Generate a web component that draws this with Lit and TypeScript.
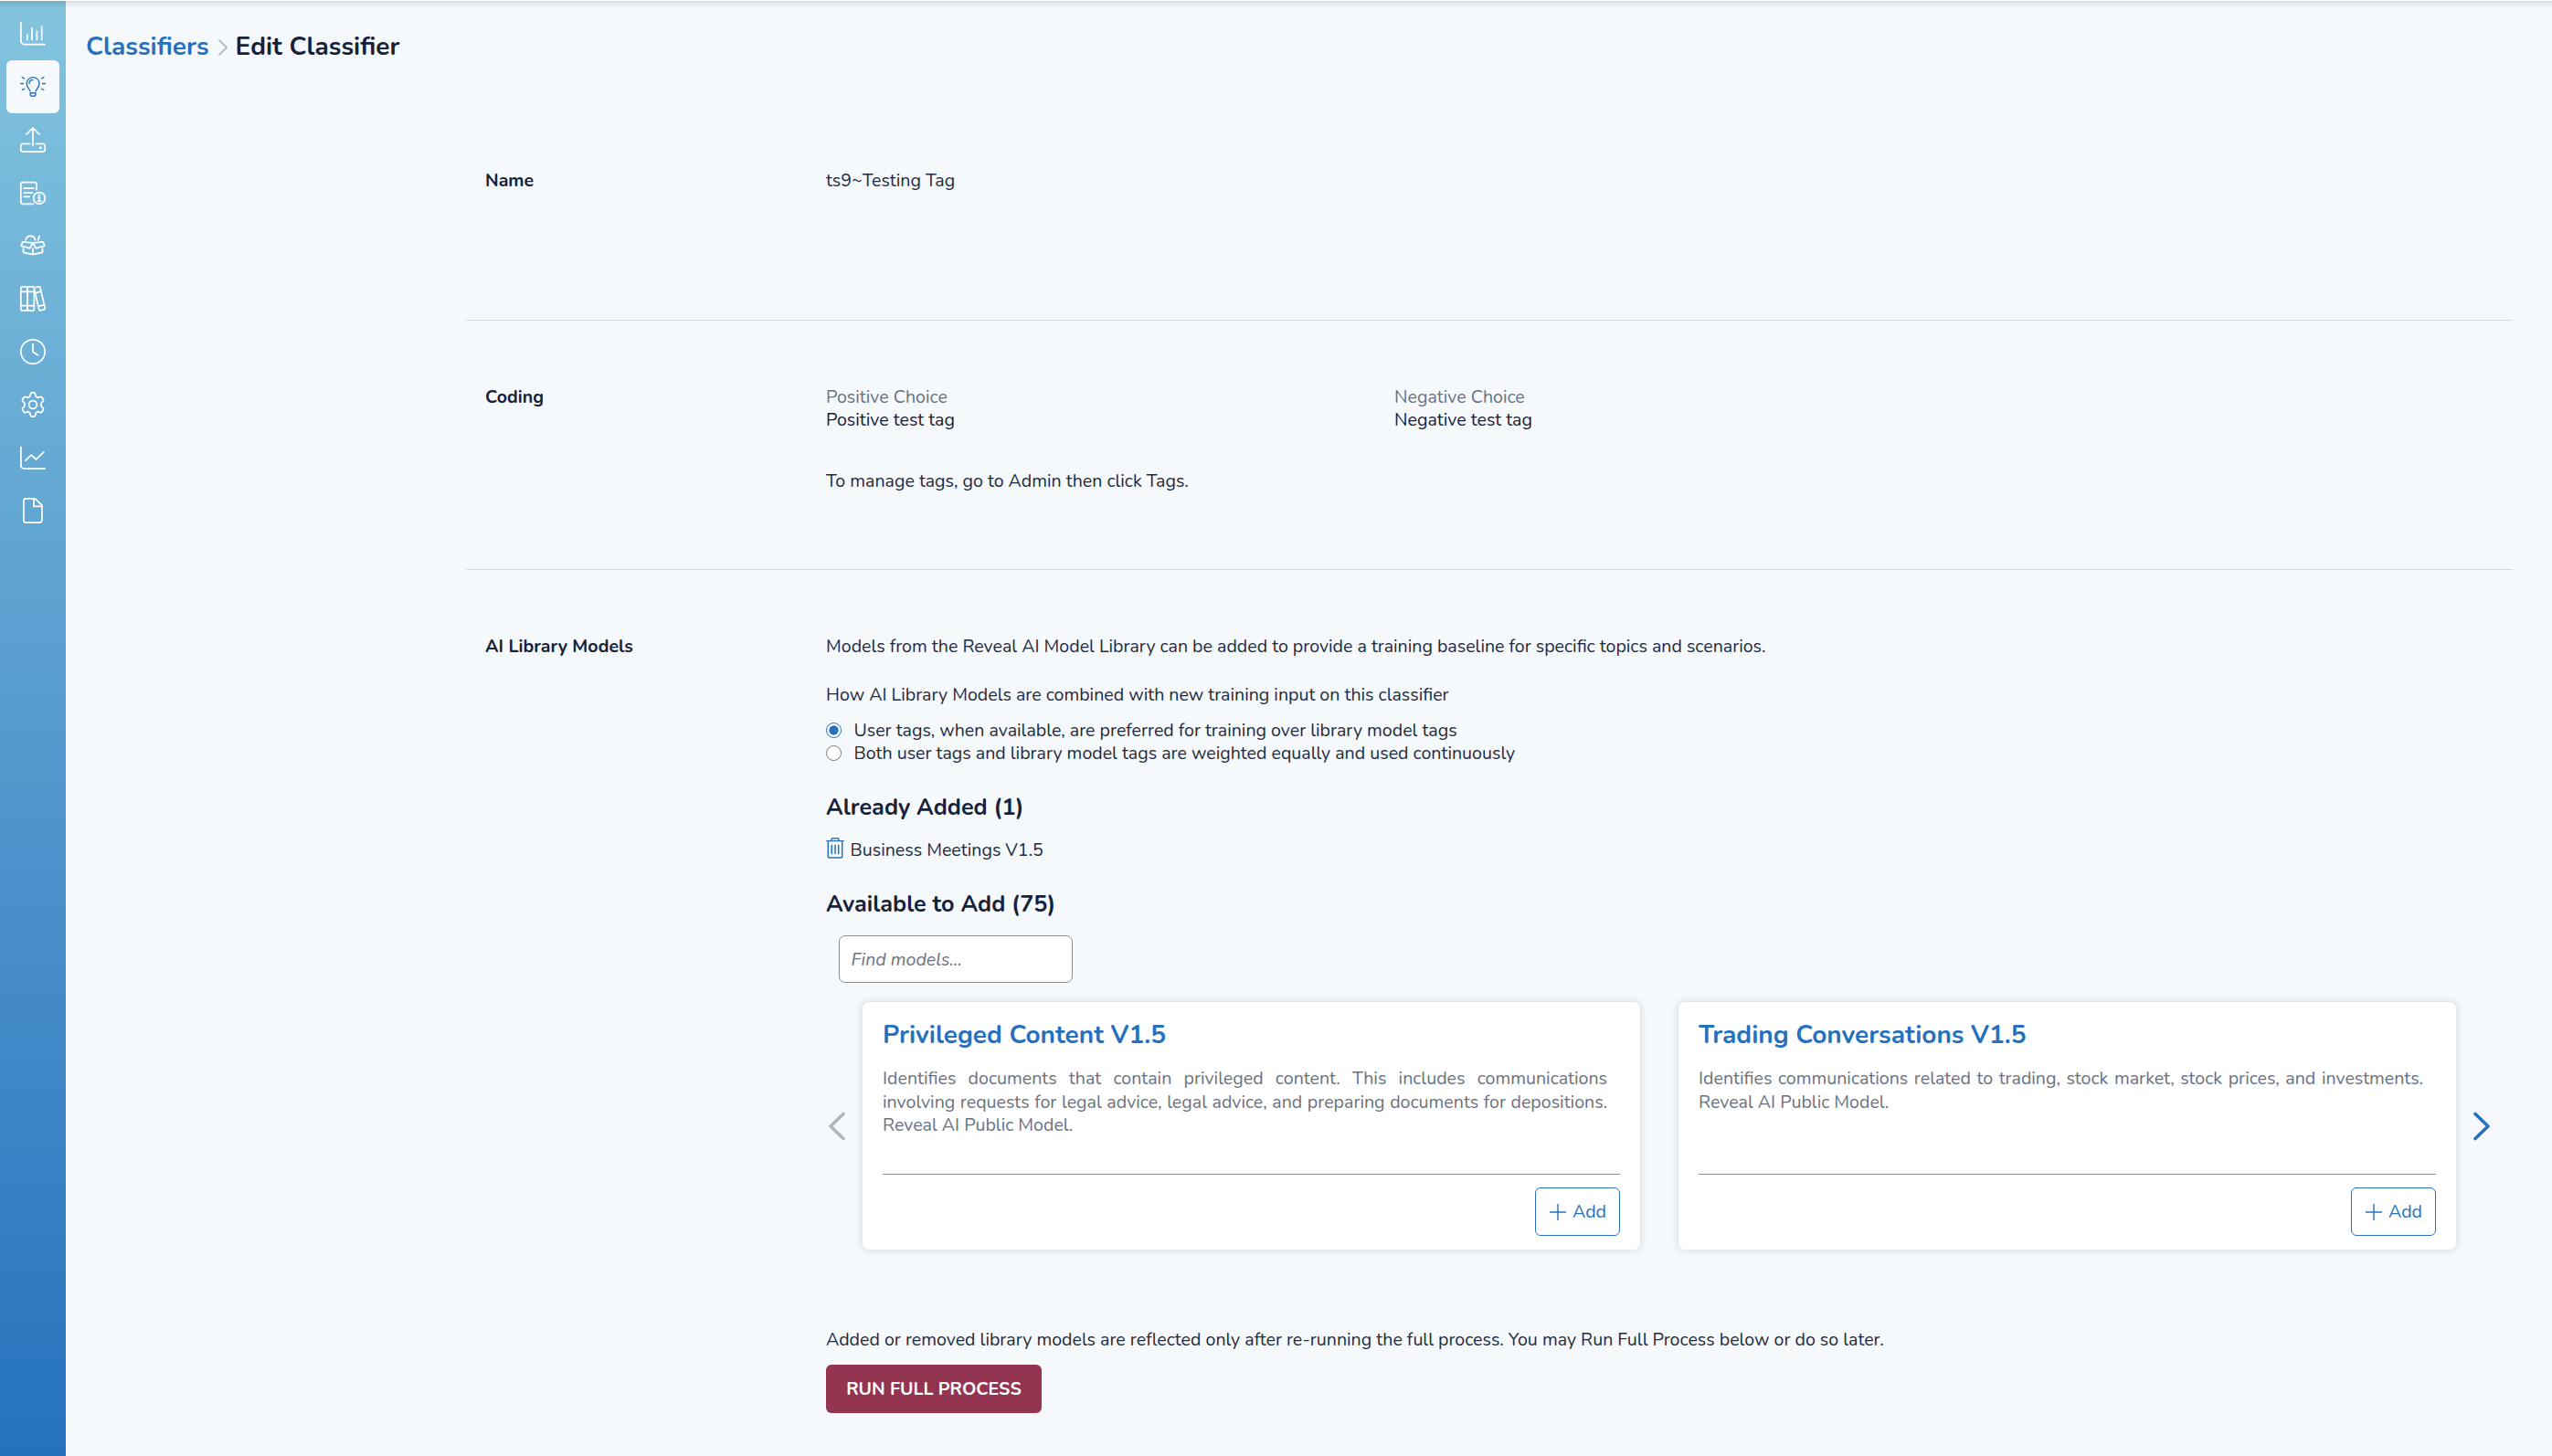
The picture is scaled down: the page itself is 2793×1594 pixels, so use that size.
import { LitElement, html, css, svg } from "lit";
import { customElement, property } from "lit/decorators.js";

const ICONS: Record<string, unknown> = {
  chart: svg`<path d="M.9 1.800V21.500a4 4 0 0 0 4 4H27.200M7.800 20.500v-5.500M13 20.500V8M18.400 20.500v-9.500M23.700 20.500V6"/>`,
  bulb: svg`<path d="M11 18.800c-.3-2-3.800-4-3.800-8.300a6.900 6.900 0 0 1 13.800 0c0 4.300-3.500 6.300-3.900 8.300M10 10.500c0-2.300 1.600-4 3.900-4M11.200 20.800h5.800v1.400a2 2 0 0 1-2 2h-1.800a2 2 0 0 1-2-2zM.8 10.500h2.700M24.500 10.500h2.800M2.200 3.600l2.300 1.200M25.900 3.600l-2.300 1.200M2.200 17.500l2.300-1.200M25.900 17.500l-2.300-1.200"/>`,
  upload: svg`<path d="M14 20V1.200M7 8l7-7 7 7M10.500 18.400H3.500a2.700 2.700 0 0 0-2.700 2.700v3.300a2.700 2.700 0 0 0 2.700 2.700h21a2.700 2.700 0 0 0 2.700-2.700v-3.300a2.700 2.700 0 0 0-2.700-2.700h-7"/><circle cx="22.400" cy="22.800" r=".7"/>`,
  report: svg`<path d="M14.500 26.300H3a2.200 2.200 0 0 1-2.200-2.200V4.800A2.200 2.200 0 0 1 3 2.600h12.700A2.200 2.200 0 0 1 17.900 4.800v6M4.200 9.200h10.600M4.200 14.200h9.200M4.200 18.300h6"/><circle cx="21" cy="19.900" r="6.300"/><path d="M20 19.200h1.200v3.800M19.500 23.100h3.200"/><circle cx="21" cy="16.800" r=".4"/>`,
  box: svg`<path d="M14 10.900 2.800 9.900 1.200 14.200l9.400 2.600zM14 10.900l11.200-1 1.600 4.300-9.400 2.600zM3.500 17v4.300L14 23.700l10.500-2.400V17M14 17v6.500M6.200 7.900a5.200 5.200 0 0 1 10.300 0M19.700 7.800l1.500-4.400"/>`,
  books: svg`<rect x=".8" y=".8" width="7.200" height="26.400" rx="2"/><rect x="8" y=".8" width="7.400" height="26.400" rx="2"/><path d="M.8 6.300h14.600M.8 21.500h14.600M17.200 1.500l3-.7a1.500 1.500 0 0 1 1.800 1.100l5.200 22.200a1.500 1.500 0 0 1-1.100 1.800l-3.600.9a1.500 1.500 0 0 1-1.800-1.100L15.700 4M16.300 7.900l5.600-1.500M20.200 22.300l6-1.600"/>`,
  clock: svg`<circle cx="14" cy="14" r="13.200"/><path d="M14 5.800v8.400l5.600 3.500"/>`,
  gear: svg`<path d="M11.600 1.900a1.400 1.400 0 0 1 1.300-1.100h2.200a1.400 1.400 0 0 1 1.300 1.100l.9 3.200a9.300 9.300 0 0 1 2 1.200l3-.9a1.400 1.400 0 0 1 1.600.6l1.400 2.500a1.400 1.400 0 0 1-.3 1.800l-2 2.200a9 9 0 0 1 0 3l2 2.200a1.400 1.400 0 0 1 .3 1.800l-1.400 2.500a1.400 1.400 0 0 1-1.600.6l-3-.9a9.300 9.300 0 0 1-2 1.200l-.9 3.200a1.400 1.400 0 0 1-1.300 1.100h-2.200a1.400 1.400 0 0 1-1.300-1.100l-.9-3.200a9.300 9.300 0 0 1-2-1.200l-3 .9a1.400 1.400 0 0 1-1.600-.6l-1.400-2.500a1.400 1.400 0 0 1 .3-1.800l2-2.200a9 9 0 0 1 0-3l-2-2.200a1.400 1.400 0 0 1-.3-1.800l1.400-2.500a1.400 1.400 0 0 1 1.600-.6l3 .9a9.300 9.300 0 0 1 2-1.200z"/><circle cx="14" cy="14" r="4.400"/>`,
  trend: svg`<path d="M.9 2.400v20a3.600 3.600 0 0 0 3.600 3.600h22.700M6 17.200l6.200-6L17.600 16 25.800 7.800"/>`,
  file: svg`<path d="M6.400.8h9.800L23.900 8v16.700a2.500 2.500 0 0 1-2.500 2.500h-15a2.500 2.500 0 0 1-2.500-2.500V3.300A2.500 2.500 0 0 1 6.400.8zM15 .9v8.500h8.700"/>`,
};

const NAV = ["chart", "bulb", "upload", "report", "box", "books", "clock", "gear", "trend", "file"];

const MODELS = [
  {
    title: "Privileged Content V1.5",
    text: "Identifies documents that contain privileged content. This includes communications involving requests for legal advice, legal advice, and preparing documents for depositions. Reveal AI Public Model.",
  },
  {
    title: "Trading Conversations V1.5",
    text: "Identifies communications related to trading, stock market, stock prices, and investments. Reveal AI Public Model.",
  },
];

@customElement("side-nav")
export class SideNav extends LitElement {
  @property() active = "bulb";

  static styles = css`
    :host {
      display: block;
      width: 72px;
      flex: none;
      background: linear-gradient(180deg, #83c4de 0%, #2671be 100%);
    }
    .list {
      display: flex;
      flex-direction: column;
      align-items: center;
      padding-top: 7px;
    }
    .item {
      width: 58px;
      height: 58px;
      border-radius: 6px;
      display: flex;
      align-items: center;
      justify-content: center;
      color: #fff;
    }
    .item.active {
      background: #f5f9fc;
      color: #2671be;
    }
    svg {
      width: 28px;
      height: 28px;
      fill: none;
      stroke: currentColor;
      stroke-width: 1.75;
      stroke-linecap: round;
      stroke-linejoin: round;
    }
    .active svg {
      stroke-width: 1.4;
    }
  `;

  render() {
    return html`<nav class="list">
      ${NAV.map(
        (name) => html`<div class="item ${name === this.active ? "active" : ""}">
          <svg viewBox="0 0 28 28">${ICONS[name]}</svg>
        </div>`
      )}
    </nav>`;
  }
}

@customElement("model-card")
export class ModelCard extends LitElement {
  @property() heading = "";
  @property() text = "";

  static styles = css`
    :host {
      display: flex;
      flex-direction: column;
      box-sizing: border-box;
      height: 271px;
      padding: 19px 22px 15px;
      border-radius: 7px;
      background: #fff;
      box-shadow: 0 0 10px rgba(0, 0, 0, 0.15);
    }
    .title {
      font-size: 28px;
      line-height: 34px;
      font-weight: 700;
      color: #2671be;
    }
    .text {
      margin-top: 18.3px;
      padding-right: 14px;
      line-height: 25.48px;
      text-align: justify;
      color: #6a7280;
      flex: 1;
    }
    .actions {
      display: flex;
      justify-content: flex-end;
      border-top: 1px solid #878d97;
      padding-top: 14px;
    }
    .add {
      box-sizing: border-box;
      width: 93px;
      height: 53px;
      display: flex;
      align-items: center;
      gap: 6px;
      padding: 0 0 0 14px;
      border: 1px solid #2671be;
      border-radius: 6px;
      background: #fff;
      color: #2671be;
      font: inherit;
    }
    svg {
      width: 20px;
      height: 20px;
      fill: none;
      stroke: currentColor;
      stroke-width: 1.4;
      stroke-linecap: round;
    }
  `;

  render() {
    return html`
      <div class="title">${this.heading}</div>
      <div class="text">${this.text}</div>
      <div class="actions">
        <button class="add">
          <svg viewBox="0 0 20 20"><path d="M10 1.500v17M1.500 10h17" /></svg>Add
        </button>
      </div>
    `;
  }
}

@customElement("app-root")
export class AppRoot extends LitElement {
  static styles = css`
    :host {
      display: flex;
      flex-direction: column;
      box-sizing: border-box;
      height: 1594px;
      padding-top: 1px;
      overflow: hidden;
      background: #fff;
      font-family: Nunito, Lato, "Open Sans", sans-serif;
      font-size: 19.6px;
      line-height: 25px;
      color: #1f2b40;
    }
    .shell {
      flex: 1;
      display: flex;
      min-height: 0;
      position: relative;
      background: #f5f9fc;
    }
    .shade {
      position: absolute;
      inset: 0 0 auto 0;
      height: 9px;
      background: linear-gradient(180deg, rgba(0, 0, 0, 0.1), rgba(0, 0, 0, 0));
    }
    .page {
      flex: 1;
      min-width: 0;
      padding: 32px 43px 0 22px;
    }
    .crumbs {
      display: flex;
      align-items: center;
      height: 36px;
      font-size: 28px;
      line-height: 36px;
      font-weight: 700;
    }
    .crumb-link {
      color: #2671be;
    }
    .crumb-now {
      color: #16223a;
    }
    .crumb-sep {
      width: 10px;
      height: 18px;
      margin: 1px 9px 0 10px;
      fill: none;
      stroke: #b4b8be;
      stroke-width: 1.9;
      stroke-linecap: round;
      stroke-linejoin: round;
    }
    .form {
      padding-top: 45px;
      margin-left: 416px;
    }
    .section {
      display: grid;
      grid-template-columns: 373px 1fr;
      box-sizing: border-box;
      padding: 71px 0 0 21px;
      border-bottom: 1px solid #d5dade;
    }
    .section.name {
      height: 237px;
    }
    .section.coding {
      height: 273px;
    }
    .section.models {
      border: 0;
    }
    .label {
      font-weight: 700;
      color: #16223a;
    }
    .choices {
      display: grid;
      grid-template-columns: 622px 1fr;
    }
    .muted {
      color: #6a7280;
    }
    .value {
      color: #16223a;
    }
    .note {
      margin-top: 42px;
    }
    .how {
      margin-top: 28px;
    }
    .radios {
      margin-top: 14px;
    }
    .radio {
      display: flex;
      align-items: center;
    }
    .dot {
      box-sizing: border-box;
      width: 17px;
      height: 17px;
      margin-right: 13.5px;
      border: 1.2px solid #767676;
      border-radius: 50%;
      background: #fff;
    }
    .dot.on {
      border: 1.5px solid #2671be;
      background: radial-gradient(circle, #2671be 0 4.8px, #fff 5.4px);
    }
    .heading {
      font-size: 25.2px;
      line-height: 30px;
      font-weight: 700;
      color: #16223a;
    }
    .added-head {
      margin-top: 32px;
    }
    .avail-head {
      margin-top: 31px;
    }
    .added {
      display: flex;
      align-items: flex-start;
      height: 28px;
      margin-top: 17px;
    }
    .added-name {
      margin-top: 2px;
    }
    .trash {
      width: 20px;
      height: 23px;
      margin: 1px 6.5px 0 0;
      fill: none;
      stroke: #2671be;
      stroke-width: 1.5;
      stroke-linejoin: round;
      stroke-linecap: round;
    }
    .find {
      display: block;
      box-sizing: border-box;
      width: 256px;
      height: 52px;
      margin: 19px 0 0 14px;
      padding: 0 12.5px;
      border: 1px solid #878d97;
      border-radius: 7px;
      background: #fff;
      font: inherit;
    }
    .find::placeholder {
      font-style: italic;
      color: #6a7280;
      opacity: 1;
    }
    .carousel {
      display: grid;
      grid-template-columns: 40px 851px 42px 851px 1fr;
      align-items: center;
      margin-top: 21px;
    }
    .arrow {
      width: 20px;
      height: 32px;
      margin: 0 0 0 2px;
      fill: none;
      stroke: #b2b6bc;
      stroke-width: 3.6;
      stroke-linecap: round;
      stroke-linejoin: round;
    }
    .arrow.next {
      margin-left: 18px;
      stroke: #2671be;
    }
    .rerun {
      margin-top: 86px;
    }
    .run {
      display: flex;
      align-items: center;
      justify-content: center;
      width: 236px;
      height: 53px;
      margin-top: 15px;
      padding: 0;
      border: 0;
      border-radius: 6px;
      background: #933551;
      color: #fff;
      font: inherit;
      font-weight: 700;
    }
  `;

  render() {
    return html`
      <div class="shell">
        <side-nav></side-nav>
        <main class="page">
          <div class="crumbs">
            <span class="crumb-link">Classifiers</span>
            <svg class="crumb-sep" viewBox="0 0 10 18"><path d="M1.200 1.200 9 9l-7.800 7.800" /></svg>
            <span class="crumb-now">Edit Classifier</span>
          </div>
          <div class="form">
            <section class="section name">
              <div class="label">Name</div>
              <div>ts9~Testing Tag</div>
            </section>
            <section class="section coding">
              <div class="label">Coding</div>
              <div>
                <div class="choices">
                  <div>
                    <div class="muted">Positive Choice</div>
                    <div class="value">Positive test tag</div>
                  </div>
                  <div>
                    <div class="muted">Negative Choice</div>
                    <div class="value">Negative test tag</div>
                  </div>
                </div>
                <div class="note">To manage tags, go to Admin then click Tags.</div>
              </div>
            </section>
            <section class="section models">
              <div class="label">AI Library Models</div>
              <div>
                <div>Models from the Reveal AI Model Library can be added to provide a training baseline for specific topics and scenarios.</div>
                <div class="how">How AI Library Models are combined with new training input on this classifier</div>
                <div class="radios">
                  <div class="radio"><span class="dot on"></span>User tags, when available, are preferred for training over library model tags</div>
                  <div class="radio"><span class="dot"></span>Both user tags and library model tags are weighted equally and used continuously</div>
                </div>
                <div class="heading added-head">Already Added (1)</div>
                <div class="added">
                  <svg class="trash" viewBox="0 0 20 24" preserveAspectRatio="none">
                    <path d="M.8 3.800h18.400M6 3.500V2.400A1.600 1.600 0 0 1 7.600.8h4.800A1.600 1.600 0 0 1 14 2.400v1.100M2.300 4v17a2 2 0 0 0 2 2h11.400a2 2 0 0 0 2-2V4M6.300 8.500v9.800M10 8.500v9.800M13.700 8.500v9.800" />
                  </svg>
                  <span class="added-name">Business Meetings V1.5</span>
                </div>
                <div class="heading avail-head">Available to Add (75)</div>
                <input class="find" placeholder="Find models..." />
                <div class="carousel">
                  <svg class="arrow" viewBox="0 0 20 32"><path d="M17 2.500 3 16l14 13.500" /></svg>
                  <model-card .heading=${MODELS[0].title} .text=${MODELS[0].text}></model-card>
                  <span></span>
                  <model-card .heading=${MODELS[1].title} .text=${MODELS[1].text}></model-card>
                  <svg class="arrow next" viewBox="0 0 20 32"><path d="m3 2.500 14 13.500L3 29.500" /></svg>
                </div>
                <div class="rerun">Added or removed library models are reflected only after re-running the full process. You may Run Full Process below or do so later.</div>
                <button class="run">RUN FULL PROCESS</button>
              </div>
            </section>
          </div>
        </main>
        <div class="shade"></div>
      </div>
    `;
  }
}
